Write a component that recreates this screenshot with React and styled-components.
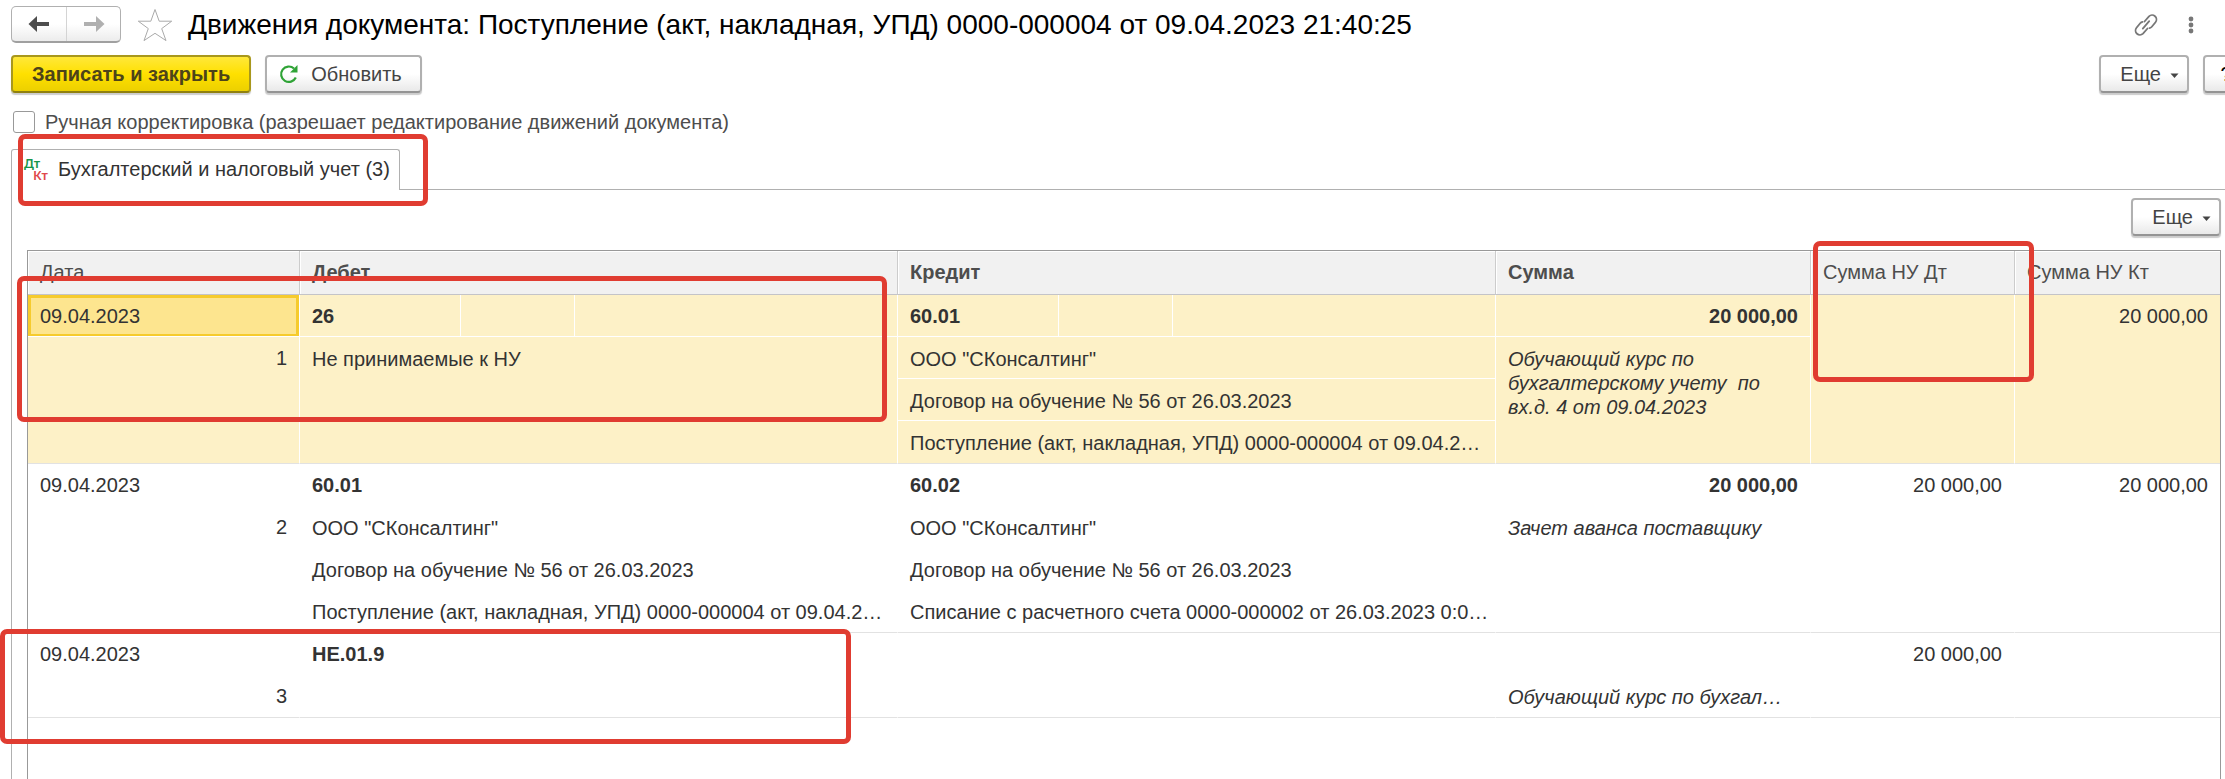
import { useState } from "react";
import styled, { createGlobalStyle, css } from "styled-components";

const entries = [
  {
    id: 1,
    date: "09.04.2023",
    selected: true,
    debit: { account: "26", details: ["Не принимаемые к НУ"] },
    credit: {
      account: "60.01",
      details: [
        'ООО "СКонсалтинг"',
        "Договор на обучение № 56 от 26.03.2023",
        "Поступление (акт, накладная, УПД) 0000-000004 от 09.04.2…",
      ],
    },
    sum: "20 000,00",
    comment: "Обучающий курс по бухгалтерскому учету  по вх.д. 4 от 09.04.2023",
    taxDebit: "",
    taxCredit: "20 000,00",
  },
  {
    id: 2,
    date: "09.04.2023",
    debit: {
      account: "60.01",
      details: [
        'ООО "СКонсалтинг"',
        "Договор на обучение № 56 от 26.03.2023",
        "Поступление (акт, накладная, УПД) 0000-000004 от 09.04.2…",
      ],
    },
    credit: {
      account: "60.02",
      details: [
        'ООО "СКонсалтинг"',
        "Договор на обучение № 56 от 26.03.2023",
        "Списание с расчетного счета 0000-000002 от 26.03.2023 0:0…",
      ],
    },
    sum: "20 000,00",
    comment: "Зачет аванса поставщику",
    taxDebit: "20 000,00",
    taxCredit: "20 000,00",
  },
  {
    id: 3,
    date: "09.04.2023",
    debit: { account: "НЕ.01.9", details: [] },
    credit: { account: "", details: [] },
    sum: "",
    comment: "Обучающий курс по бухгал…",
    taxDebit: "20 000,00",
    taxCredit: "",
  },
];

function Account({ side, selected }) {
  return (
    <>
      <AccountRow $selected={selected}>
        <AccountCode>{side.account}</AccountCode>
        <Quantity />
        <Currency />
      </AccountRow>
      {side.details.map((detail, i) => (
        <DetailLine
          key={detail}
          $ruled={selected && i < 2 && side.details.length > 1}
        >
          {detail}
        </DetailLine>
      ))}
    </>
  );
}

function MoreButton() {
  return (
    <Button $more>
      Еще
      <Caret width="9" height="6" viewBox="0 0 9 6" aria-hidden="true">
        <path d="M0.500 0.500h8L4.500 5z" fill="#444" />
      </Caret>
    </Button>
  );
}

export default function App() {
  const [manual, setManual] = useState(false);

  return (
    <>
      <GlobalStyle />
      <Page>
        <TitleBar>
          <NavGroup>
            <NavButton aria-label="Назад">
              <svg width="22" height="18" viewBox="0 0 22 18">
                <path d="M0.500 9L9 1v6h12v4H9v6z" fill="#4d4d4d" />
              </svg>
            </NavButton>
            <NavButton aria-label="Вперед">
              <svg width="22" height="18" viewBox="0 0 22 18">
                <path d="M21.500 9L13 1v6H1v4h12v6z" fill="#b0b0b0" />
              </svg>
            </NavButton>
          </NavGroup>
          <IconButton aria-label="Избранное">
            <svg width="36" height="34" viewBox="0 0 36 34">
              <path
                d="M18 1.500l4.200 11.700h12.500L24.700 20.600l4.300 12L18 25.300 7 32.600l4.300-12L1.300 13.200h12.500z"
                fill="#fff"
                stroke="#aaa"
              />
            </svg>
          </IconButton>
          <Title>
            Движения документа: Поступление (акт, накладная, УПД) 0000-000004 от
            09.04.2023 21:40:25
          </Title>
          <TitleTools>
            <IconButton aria-label="Получить ссылку">
              <svg
                width="24"
                height="24"
                viewBox="0 0 24 24"
                fill="none"
                stroke="#777"
                strokeWidth="1.800"
                strokeLinecap="round"
              >
                <path d="M10.500 8.500l4.500-5.200a4.400 4.400 0 0 1 6.500 5.900l-3.700 4.500a4 4 0 0 1-2.300 1.400" />
                <path d="M13.500 15.500L9 20.700a4.400 4.400 0 0 1-6.500-5.900l3.700-4.500a4 4 0 0 1 2.300-1.400" />
                <path d="M8.800 15.600l6.400-7.400" />
              </svg>
            </IconButton>
            <IconButton aria-label="Меню">
              <svg width="6" height="20" viewBox="0 0 6 20" fill="#777">
                <circle cx="3" cy="4" r="2.400" />
                <circle cx="3" cy="10" r="2.400" />
                <circle cx="3" cy="16" r="2.400" />
              </svg>
            </IconButton>
          </TitleTools>
        </TitleBar>

        <CommandBar>
          <Button $primary>Записать и закрыть</Button>
          <RefreshButton>
            <svg width="20" height="20" viewBox="0 0 20 20" aria-hidden="true">
              <path
                d="M16.800 13.500A7.700 7.700 0 1 1 15 4.500"
                fill="none"
                stroke="#2fa336"
                strokeWidth="2.200"
              />
              <path d="M18.500 1v7.500H11z" fill="#2fa336" />
            </svg>
            Обновить
          </RefreshButton>
          <Spacer />
          <MoreButton />
          <HelpButton aria-label="Справка">?</HelpButton>
        </CommandBar>

        <ManualLabel>
          <Checkbox
            type="checkbox"
            checked={manual}
            onChange={(e) => setManual(e.target.checked)}
          />
          Ручная корректировка (разрешает редактирование движений документа)
        </ManualLabel>

        <Tabs role="tablist">
          <Tab role="tab" aria-selected="true">
            <TabIcon aria-hidden="true">
              <DebitMark>Дт</DebitMark>
              <CreditMark>Кт</CreditMark>
            </TabIcon>
            Бухгалтерский и налоговый учет (3)
          </Tab>
        </Tabs>

        <Panel role="tabpanel">
          <PanelTools>
            <MoreButton />
          </PanelTools>
          <TableFrame>
            <Table>
              <colgroup>
                <Col $width={272} />
                <Col />
                <Col />
                <Col $width={315} />
                <Col $width={204} />
                <Col $width={205} />
              </colgroup>
              <thead>
                <tr>
                  <Th>Дата</Th>
                  <Th $bold>Дебет</Th>
                  <Th $bold>Кредит</Th>
                  <Th $bold>Сумма</Th>
                  <Th>Сумма НУ Дт</Th>
                  <Th>Сумма НУ Кт</Th>
                </tr>
              </thead>
              <tbody>
                {entries.map((entry) => (
                  <Row key={entry.id} $selected={entry.selected}>
                    <Td>
                      <Line $active={entry.selected}>{entry.date}</Line>
                      <Line $right>{entry.id}</Line>
                    </Td>
                    <Td>
                      <Account side={entry.debit} selected={entry.selected} />
                    </Td>
                    <Td>
                      <Account side={entry.credit} selected={entry.selected} />
                    </Td>
                    <Td>
                      <Line $right $bold $ruled={entry.selected}>
                        {entry.sum}
                      </Line>
                      <Comment>{entry.comment}</Comment>
                    </Td>
                    <Td>
                      <Line $right>{entry.taxDebit}</Line>
                    </Td>
                    <Td>
                      <Line $right>{entry.taxCredit}</Line>
                    </Td>
                  </Row>
                ))}
              </tbody>
            </Table>
          </TableFrame>
        </Panel>

        <TabMark />
        <FirstEntryMark />
        <TaxDebitMark />
        <ThirdEntryMark />
      </Page>
    </>
  );
}

const GlobalStyle = createGlobalStyle`
  * {
    box-sizing: border-box;
  }

  body {
    margin: 0;
    background: #fff;
    color: #333;
    font-family: "Liberation Sans", Arial, sans-serif;
    font-size: 20px;
    line-height: 24px;
  }

  button {
    font: inherit;
    color: inherit;
    cursor: pointer;
  }
`;

const Page = styled.main`
  position: relative;
  display: flex;
  flex-direction: column;
  min-height: 100vh;
  padding: 6px 0 0 11px;
  overflow: hidden;
`;

const TitleBar = styled.header`
  display: flex;
  align-items: center;
  height: 37px;
`;

const NavGroup = styled.div`
  display: flex;
  height: 37px;
  margin-right: 16px;
  border: 1px solid #b0b0b0;
  border-bottom: 2px solid #a0a0a0;
  border-radius: 5px;
  background: linear-gradient(#fff 50%, #ececec);
`;

const NavButton = styled.button`
  display: flex;
  align-items: center;
  justify-content: center;
  width: 54px;
  padding: 0;
  border: 0;
  background: none;

  & + & {
    border-left: 1px solid #d4d4d4;
  }
`;

const IconButton = styled.button`
  display: flex;
  padding: 0;
  border: 0;
  background: none;
`;

const Title = styled.h1`
  flex: 1;
  margin: 0 0 0 15px;
  color: #000;
  font-size: 28px;
  font-weight: 400;
  line-height: 36px;
  white-space: nowrap;
`;

const TitleTools = styled.div`
  display: flex;
  align-items: center;
  gap: 30px;
  margin-right: 31px;
`;

/* the bar runs past the right edge of the window, so the help button is cut */
const CommandBar = styled.div`
  display: flex;
  gap: 14px;
  margin: 12px -24px 0 0;
`;

const Spacer = styled.div`
  flex: 1;
`;

const Button = styled.button`
  display: flex;
  align-items: center;
  justify-content: center;
  gap: 12px;
  height: 38px;
  padding: 0 12px;
  border: 2px solid #b0b0b0;
  border-bottom-color: #949494;
  border-radius: 4px;
  background: linear-gradient(#fff 50%, #e9e9e9);
  box-shadow: 0 2px 1px #ccc;
  color: #444;
  white-space: nowrap;

  ${({ $primary }) =>
    $primary &&
    css`
      padding: 0 19px;
      border-color: #a8971c;
      border-bottom-color: #8f8010;
      background: linear-gradient(#ffe83a, #ffe000 50%, #ecd000);
      color: #4d4419;
      font-weight: 700;
    `}

  ${({ $more }) =>
    $more &&
    css`
      gap: 9px;
      padding: 0 8px 0 19px;
    `}
`;

const RefreshButton = styled(Button)`
  padding-right: 18px;
`;

const HelpButton = styled(Button)`
  width: 46px;
  color: #000;
`;

const Caret = styled.svg`
  margin-top: 4px;
`;

const ManualLabel = styled.label`
  display: flex;
  align-items: center;
  align-self: flex-start;
  gap: 10px;
  margin: 17px 0 15px 2px;
  color: #4d4d4d;
`;

const Checkbox = styled.input`
  appearance: none;
  width: 22px;
  height: 22px;
  margin: 0;
  border: 1px solid #999;
  border-radius: 3px;
  background: #fff;

  &:checked {
    background: #4d4d4d;
  }
`;

const Tabs = styled.div`
  display: flex;

  &::after {
    content: "";
    flex: 1;
    border-bottom: 1px solid #b0b0b0;
  }
`;

const Tab = styled.button`
  display: flex;
  align-items: center;
  gap: 10px;
  height: 41px;
  padding: 0 9px 2px 12px;
  border: 1px solid #b0b0b0;
  border-bottom: 0;
  border-radius: 3px 3px 0 0;
  background: #fff;
`;

const TabIcon = styled.span`
  display: flex;
  flex-direction: column;
  width: 24px;
  font-family: "Noto Sans", sans-serif;
  font-size: 13px;
  font-weight: 600;
  line-height: 12px;
`;

const DebitMark = styled.span`
  align-self: flex-start;
  color: #17964a;
`;

const CreditMark = styled.span`
  align-self: flex-end;
  color: #e0484b;
`;

const Panel = styled.section`
  display: flex;
  flex: 1;
  flex-direction: column;
  padding: 8px 4px 0 15px;
  border-left: 1px solid #b0b0b0;
`;

const PanelTools = styled.div`
  display: flex;
  justify-content: flex-end;
  margin-bottom: 14px;
`;

const TableFrame = styled.div`
  flex: 1;
  border: 1px solid #999;
  border-bottom: 0;
`;

const Table = styled.table`
  width: 100%;
  table-layout: fixed;
  border-collapse: separate;
  border-spacing: 0;
`;

const Col = styled.col`
  width: ${({ $width }) => ($width ? `${$width}px` : "auto")};
`;

const Th = styled.th`
  height: 44px;
  padding: 0 12px 2px;
  border-right: 1px solid #ccc;
  border-bottom: 1px solid #c4c4c8;
  background: #f1f1f1;
  box-shadow: inset 1px 1px #fff;
  color: #4d4d4d;
  font-weight: ${({ $bold }) => ($bold ? 700 : 400)};
  text-align: left;

  &:last-child {
    border-right: 0;
  }
`;

const Row = styled.tr`
  background: ${({ $selected }) => ($selected ? "#fdf1c7" : "#fff")};
`;

const Td = styled.td`
  padding: 0;
  border-right: 1px solid #fff;
  border-bottom: 1px solid #e2e2e2;
  vertical-align: top;

  &:last-child {
    border-right: 0;
  }
`;

const Line = styled.div`
  min-height: 42px;
  padding: 9px 12px;
  font-weight: ${({ $bold }) => ($bold ? 700 : 400)};
  text-align: ${({ $right }) => ($right ? "right" : "left")};
  white-space: nowrap;

  ${({ $ruled }) =>
    $ruled &&
    css`
      box-shadow: inset 0 -1px #fff;
    `}

  ${({ $active }) =>
    $active &&
    css`
      background: #fde58f;
      box-shadow: inset 0 -1px #fff, inset 0 0 0 3px #f6cb2d;
    `}
`;

const DetailLine = styled(Line)`
  padding: 10px 12px 8px;
`;

const Comment = styled(DetailLine)`
  font-style: italic;
  white-space: pre-wrap;
`;

const AccountRow = styled.div`
  display: flex;
  height: 42px;
  font-weight: 700;
  border-color: transparent;

  ${({ $selected }) =>
    $selected &&
    css`
      box-shadow: inset 0 -1px #fff;
      border-color: #fff;
    `}
`;

const AccountCode = styled.div`
  width: 160px;
  padding: 9px 12px;
`;

const Quantity = styled.div`
  width: 115px;
  border: solid;
  border-width: 0 1px;
  border-color: inherit;
`;

const Currency = styled.div`
  flex: 1;
`;

/* red frames drawn over the form */
const Mark = styled.div`
  position: absolute;
  border: 5px solid #e03c31;
  border-radius: 7px;
  pointer-events: none;
`;

const TabMark = styled(Mark)`
  top: 134px;
  left: 18px;
  width: 410px;
  height: 72px;
`;

const FirstEntryMark = styled(Mark)`
  top: 276px;
  left: 17px;
  width: 870px;
  height: 146px;
`;

const TaxDebitMark = styled(Mark)`
  top: 241px;
  right: 191px;
  width: 221px;
  height: 141px;
`;

const ThirdEntryMark = styled(Mark)`
  top: 629px;
  left: 0;
  width: 851px;
  height: 115px;
`;
